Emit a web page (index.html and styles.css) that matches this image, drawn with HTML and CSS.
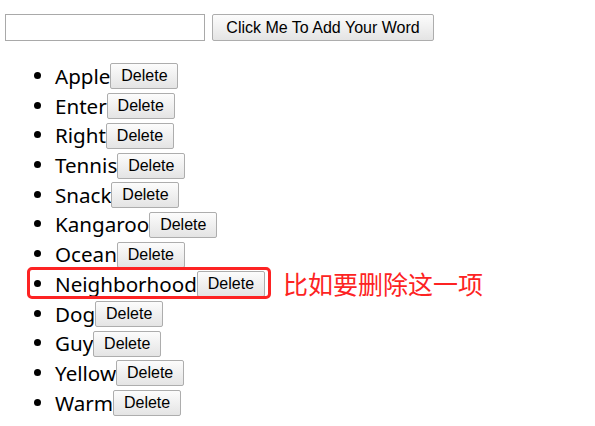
FILE: index.html
```html
<!DOCTYPE html>
<html>
<head>
<meta charset="utf-8">
<link rel="stylesheet" href="styles.css">
</head>
<body>
<div class="bar">
  <input class="word" type="text">
  <button class="btn add">Click Me To Add Your Word</button>
</div>
<ul class="list">
  <li><span class="w">Apple</span><button class="btn del">Delete</button></li>
  <li><span class="w">Enter</span><button class="btn del">Delete</button></li>
  <li><span class="w">Right</span><button class="btn del">Delete</button></li>
  <li><span class="w">Tennis</span><button class="btn del">Delete</button></li>
  <li><span class="w">Snack</span><button class="btn del">Delete</button></li>
  <li><span class="w">Kangaroo</span><button class="btn del">Delete</button></li>
  <li><span class="w">Ocean</span><button class="btn del">Delete</button></li>
  <li class="mark"><span class="w">Neighborhood</span><button class="btn del">Delete</button><span class="frame"></span><span class="note">比如要删除这一项</span></li>
  <li><span class="w">Dog</span><button class="btn del">Delete</button></li>
  <li><span class="w">Guy</span><button class="btn del">Delete</button></li>
  <li><span class="w">Yellow</span><button class="btn del">Delete</button></li>
  <li><span class="w">Warm</span><button class="btn del">Delete</button></li>
</ul>
</body>
</html>
```
FILE: styles.css
```css
html, body {
  margin: 0;
  padding: 0;
  background: #fff;
}
body {
  padding: 14px 0 0 5px;
  font-family: "Noto Sans", sans-serif;
  color: #000;
}
.bar {
  display: flex;
  gap: 7px;
  height: 27px;
}
.word {
  box-sizing: border-box;
  width: 200px;
  height: 27px;
  margin: 0;
  border: 1px solid #a9a9a9;
  padding: 0 3px;
  background: #fff;
}
.btn {
  box-sizing: border-box;
  margin: 0;
  border: 1px solid #adadad;
  border-radius: 2px;
  background: linear-gradient(#fcfcfc, #e4e4e4);
  font-family: "Liberation Sans", Arial, sans-serif;
  color: #000;
  padding: 0 4px;
}
.add {
  width: 222px;
  height: 27px;
  font-size: 16px;
}
.list {
  margin: 19px 0 0 0;
  padding: 0 0 0 50px;
  font-size: 20.6px;
}
.list li {
  position: relative;
  height: 29.7px;
  line-height: 29.7px;
}
.w {
  vertical-align: middle;
}
.del {
  height: 26px;
  width: 68px;
  font-size: 16px;
  vertical-align: middle;
}
.frame {
  position: absolute;
  left: -28px;
  top: -1px;
  width: 244px;
  height: 32px;
  box-sizing: border-box;
  border: 3px solid #fd2323;
  border-radius: 5px;
}
.note {
  position: absolute;
  left: 228px;
  top: 0;
  font-family: "Noto Sans CJK SC", sans-serif;
  font-size: 25px;
  line-height: 30px;
  color: #fd2323;
  white-space: nowrap;
}
```
